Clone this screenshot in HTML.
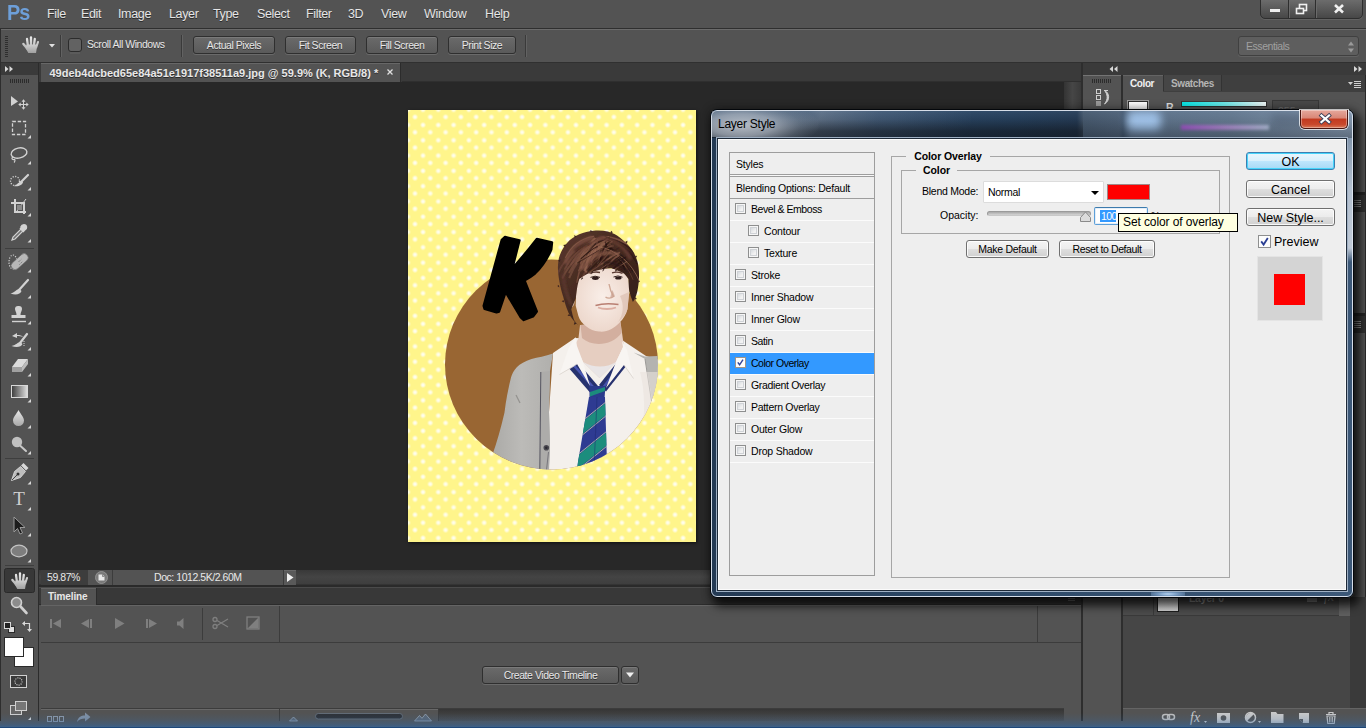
<!DOCTYPE html>
<html>
<head>
<meta charset="utf-8">
<title>Layer Style</title>
<style>
*{box-sizing:border-box;margin:0;padding:0}
html,body{width:1366px;height:728px;overflow:hidden;background:#535353;font-family:"Liberation Sans",sans-serif;}
.abs{position:absolute}
#root{position:relative;width:1366px;height:728px;overflow:hidden;background:#535353}
/* menu bar */
#menubar{left:0;top:0;width:1366px;height:28px;background:#535353}
#menubar .mi{position:absolute;top:7px;font-size:12.5px;color:#e6e6e6;text-shadow:0 1px 0 #2a2a2a;white-space:nowrap;letter-spacing:-0.35px}
#pslogo{left:7px;top:0px;font-size:22px;font-weight:bold;color:#6d9fd9;letter-spacing:-1px;transform-origin:0 0;transform:scaleX(.9)}
#winctl{left:1260px;top:-2px;width:103px;height:21px;border:1px solid #2e2e2e;border-radius:0 0 5px 5px;background:linear-gradient(#6e6e6e,#474747);box-shadow:0 1px 0 #626262}
#winctl i{position:absolute;top:0;width:1px;height:19px;background:#2e2e2e;box-shadow:1px 0 0 #6a6a6a}
/* options bar */
#optbar{left:0;top:28px;width:1366px;height:35px;background:#535353;border-top:1px solid #2f2f2f;border-bottom:1px solid #303030;box-shadow:inset 0 1px 0 #6b6b6b}
.obtn{position:absolute;top:36px;height:18px;border:1px solid #2f2f2f;border-radius:3px;background:linear-gradient(#6a6a6a,#5a5a5a);box-shadow:0 1px 0 #6a6a6a, inset 0 1px 0 #7a7a7a;color:#e8e8e8;font-size:10.5px;letter-spacing:-0.45px;text-align:center;line-height:16px;text-shadow:0 1px 0 #333;white-space:nowrap}
.vsep{position:absolute;width:1px;background:#3a3a3a;box-shadow:1px 0 0 #626262}
/* tab strip */
#tabstrip{left:39px;top:63px;width:1044px;height:19px;background:#3a3a3a}
#doctab{left:41px;top:63px;width:360px;height:19px;background:#535353;color:#e8e8e8;font-size:11px;font-weight:bold;line-height:21px;padding-left:8.5px;white-space:nowrap;text-shadow:0 1px 0 #2a2a2a;border-right:1px solid #2c2c2c;box-shadow:inset 0 1px 0 #676767}
#canvas{left:39px;top:82px;width:1044px;height:488px;background:#282828}
/* tools */
#tools{left:0;top:63px;width:39px;height:658px;background:#535353;border-right:1px solid #2c2c2c}
#toolshdr{left:0;top:63px;width:38px;height:12px;background:#3a3a3a}

/* status bar */
#status{left:39px;top:570px;width:1044px;height:18px;background:linear-gradient(#393939 0,#444 7px,#3e3e3e 14px,#2a2a2a 15px,#2a2a2a 17px,#4a4a4a 17px)}
#stzoom{left:41px;top:570px;width:47px;height:15px;background:#3d3d3d;color:#e8e8e8;font-size:10.5px;line-height:15px;padding-left:6px;letter-spacing:-0.45px}
#stmid{left:88px;top:570px;width:196px;height:15px;background:#535353}
#stdoc{left:154px;top:570px;height:15px;color:#e8e8e8;font-size:10.5px;line-height:15px;white-space:nowrap;letter-spacing:-0.45px}
#starrow{left:283px;top:570px;width:13px;height:15px;background:#595959;border-left:1px solid #3a3a3a;box-shadow:inset 0 1px 0 #686868}
/* timeline */
#tlstrip{left:39px;top:588px;width:1042px;height:17px;background:#383838;border-bottom:1px solid #2c2c2c}
#tltab{left:41px;top:588px;width:56px;height:17px;background:#535353;color:#e8e8e8;font-size:10px;letter-spacing:-0.1px;font-weight:bold;line-height:18px;padding-left:7px;border-right:1px solid #2c2c2c;box-shadow:inset 0 1px 0 #636363}
#tlbody{left:41px;top:605px;width:1040px;height:116px;background:#535353;box-shadow:inset 0 1px 0 #646464}
.hl{position:absolute;height:1px;background:#3c3c3c}
.vl{position:absolute;width:1px;background:#3c3c3c}
#cvt{left:482px;top:666px;width:137px;height:18px}
#cvtd{left:621px;top:666px;width:18px;height:18px}
/* right dock */
#dockhdr{left:1083px;top:63px;width:283px;height:12px;background:#3a3a3a}
#dockgap{left:1081px;top:63px;width:2px;height:658px;background:#2e2e2e}
#iconstrip{left:1083px;top:75px;width:38px;height:646px;background:#535353;box-shadow:inset 0 1px 0 #747474}
#dockgap2{left:1121px;top:75px;width:2px;height:646px;background:#2e2e2e}
#ptabs{left:1123px;top:75px;width:243px;height:17px;background:#3f3f3f}
#ptab1{left:1123px;top:75px;width:40px;height:17px;background:#535353;color:#f0f0f0;font-size:10px;letter-spacing:-0.4px;font-weight:bold;line-height:17px;padding-left:7px;box-shadow:inset 0 1px 0 #646464}
#ptab2{left:1163px;top:75px;width:59px;height:16px;background:#464646;color:#b4b4b4;font-size:10px;letter-spacing:-0.4px;font-weight:bold;line-height:17px;padding-left:7px;border-left:1px solid #333;border-right:1px solid #333}
#pbodyall{left:1123px;top:75px;width:243px;height:646px;background:#535353}
#lybody{left:1123px;top:597px;width:227px;height:111px;background:#464646}
#lyrow{left:1123px;top:590px;width:227px;height:26px;background:#4c4c4c;border-bottom:1px solid #3a3a3a}
#lyscroll{left:1350px;top:597px;width:16px;height:111px;background:#3a3a3a}
#lybar{left:1123px;top:708px;width:243px;height:13px;background:#535353;box-shadow:inset 0 1px 0 #646464}
#bluestrip{left:0;top:713px;width:1366px;height:15px;background:linear-gradient(rgba(52,108,170,0) 0%,rgba(52,108,170,.14) 40%,rgba(50,104,164,.36) 70%,rgba(52,100,154,.60) 86%,rgba(56,100,150,.82) 93.3%,#1e4878 93.4%,#1c467a 100%)}

/* document image */
#doc{left:408px;top:110px;width:288px;height:432px;background-color:#fff58b;box-shadow:1px 1px 3px rgba(0,0,0,.6);overflow:hidden}
/* dialog */
#doc{background-image:radial-gradient(circle,#fffdec 0,#fffdec 1px,rgba(255,253,236,0) 3.1px),radial-gradient(circle,#fffdec 0,#fffdec 1px,rgba(255,253,236,0) 3.1px);background-size:15.3px 15.3px,15.3px 15.3px;background-position:-0.65px -0.65px,-7.95px -7.95px;}
#essentials{left:1238px;top:36px;width:121px;height:20px;border:1px solid #404040;border-radius:3px;background:#5e5e5e;box-shadow:0 1px 0 #626262;color:#a0a0a0;font-size:10.5px;letter-spacing:-0.45px;line-height:18px;padding-left:7px}
/*DLGCSS*/
#dlgshadow{left:710px;top:109px;width:644px;height:489px;border-radius:7px;box-shadow:0 0 10px 1px rgba(0,0,0,.22), 4px 6px 10px 2px rgba(0,0,0,.72)}
#dlg{left:710px;top:109px;width:644px;height:489px;border-radius:7px;border:1px solid #04070b;background:#2b4665;overflow:hidden}
#dlghi{left:0;top:0;right:0;bottom:0;position:absolute;border:1px solid rgba(222,229,238,.95);border-radius:6px}
#glass1{position:absolute;left:0;top:0;width:642px;height:28px;background:linear-gradient(90deg,#2a4360 0,#2a4360 70px,#2b4664 180px,#26405c 300px,#253b55 366px,#45576b 372px,#4c5e73 408px,#3f5268 412px,#5b6f86 420px,#63778d 520px,#788ba2 600px,#8295ab 642px)}
#glass2{position:absolute;left:0;top:0;width:372px;height:28px;background:linear-gradient(rgba(140,175,215,.10) 0,rgba(20,28,40,.10) 35%,rgba(14,18,24,.55) 75%,rgba(12,16,22,.62) 100%)}
#glass2b{position:absolute;left:372px;top:0;width:270px;height:28px;background:linear-gradient(rgba(150,180,215,.12) 0,rgba(20,28,40,.04) 40%,rgba(14,18,24,.22) 80%,rgba(12,16,22,.30) 100%)}
#glass4{position:absolute;left:50px;top:0;width:210px;height:28px;background:linear-gradient(108deg,rgba(150,160,174,0) 0,rgba(150,160,174,.50) 28%,rgba(125,140,160,.28) 55%,rgba(120,140,165,0) 100%)}
#blob1{position:absolute;left:416px;top:1px;width:34px;height:20px;background:#a9cdf5;filter:blur(4px);opacity:.9;border-radius:6px}
#blob2{position:absolute;left:470px;top:15px;width:88px;height:5px;background:linear-gradient(90deg,#a055c8,#b08ad0 50%,#b4c0dc);filter:blur(1.600px)}
#blob3{position:absolute;left:560px;top:2px;width:48px;height:14px;background:#4c5c70;filter:blur(4px);opacity:.5}
#glass3{position:absolute;left:0;top:28px;width:642px;height:459px;background:linear-gradient(90deg,#243a54 0,#243a54 8px,#2c4866 40%,#3c5878 98%)}
#blob4{position:absolute;left:440px;top:481px;width:34px;height:6px;background:radial-gradient(ellipse at center,rgba(190,220,250,.95),rgba(150,190,235,.6) 45%,rgba(120,160,210,0) 100%)}
#glass5{position:absolute;right:0;top:28px;width:8px;height:200px;background:linear-gradient(rgba(200,210,222,.5) 0,rgba(200,210,222,.85) 25%,rgba(205,213,224,.9) 55%,rgba(205,213,224,0) 62%)}
#titleglow{left:712px;top:111px;width:130px;height:26px;background:radial-gradient(ellipse 78px 26px at 30px 14px,rgba(206,211,218,.86),rgba(196,202,211,.66) 42%,rgba(180,188,198,.25) 75%,rgba(170,180,192,0) 100%)}
#client{left:718px;top:139px;width:628px;height:451px;background:#eeeeee;border:1px solid #fbfbfb}
#clientframe{left:716px;top:137px;width:632px;height:455px;border:1px solid #9fb0c4;box-shadow:inset 0 0 0 1px #1e2a38}
#dlgtitle{left:718px;top:117px;font-size:12px;color:#000;white-space:nowrap;letter-spacing:-0.25px}
#closebtn{left:1300px;top:110px;width:48px;height:19px;border:1px solid #4a1510;border-top:none;border-radius:0 0 5px 5px;background:linear-gradient(#e6a89c 0%,#d98676 45%,#c23a20 50%,#c8482c 80%,#d87858 100%);box-shadow:0 0 0 1px rgba(255,255,255,.75), inset 0 0 0 1px rgba(255,255,255,.35)}
.dt{position:absolute;font-size:10.5px;letter-spacing:-0.2px;color:#000;white-space:nowrap;line-height:13px}
.dt.b{font-weight:bold;letter-spacing:-0.1px;text-align:center}
.wbtn{position:absolute;border:1px solid #707070;border-radius:3px;background:linear-gradient(#f4f4f4 0%,#ececec 48%,#dedede 52%,#d0d0d0 100%);box-shadow:inset 0 0 0 1px rgba(255,255,255,.85);font-size:11px;color:#000;text-align:center;white-space:nowrap}
#okbtn{border-color:#3c7fb1;background:linear-gradient(#eaf6fd 0%,#d9f0fc 48%,#bee6fd 52%,#a7d9f5 100%);box-shadow:inset 0 0 0 1px #46d4fb}
.cb{position:absolute;width:11px;height:11px;border:1px solid #8e8f8f;background:#f6f6f6}
.cb i{position:absolute;left:1px;top:1px;width:7px;height:7px;border:1px solid #cfd2d6;background:linear-gradient(135deg,#d6dade,#f2f2f2 70%)}
.cb.on{background:#fdfdfd;border-color:#a09488}
.cb.big{width:13px;height:13px;border-color:#8e8f8f}
.rowsep{position:absolute;left:730px;width:144px;height:1px;background:#fbfbfb}
/*ENDDLGCSS*/</style>
</head>
<body>
<div id="root">

<!-- MENU BAR -->
<div id="menubar" class="abs">
  <div id="pslogo" class="abs">Ps</div>
  <div class="mi" style="left:47px">File</div>
  <div class="mi" style="left:81px">Edit</div>
  <div class="mi" style="left:118px">Image</div>
  <div class="mi" style="left:169px">Layer</div>
  <div class="mi" style="left:213px">Type</div>
  <div class="mi" style="left:257px">Select</div>
  <div class="mi" style="left:306px">Filter</div>
  <div class="mi" style="left:348px">3D</div>
  <div class="mi" style="left:381px">View</div>
  <div class="mi" style="left:424px">Window</div>
  <div class="mi" style="left:485px">Help</div>
  <div id="winctl" class="abs"><i style="left:27px"></i><i style="left:54px"></i></div>
</div>

<!-- OPTIONS BAR -->
<div id="optbar" class="abs"></div>
<div class="obtn" style="left:193px;width:82px">Actual Pixels</div>
<div class="obtn" style="left:285px;width:71px">Fit Screen</div>
<div class="obtn" style="left:366px;width:72px">Fill Screen</div>
<div class="obtn" style="left:448px;width:68px">Print Size</div>


<!-- options bar left -->
<svg class="abs" style="left:0;top:29px" width="200" height="33" viewBox="0 29 200 33" fill="none">
<path d="M6.500 36v21" stroke="#2e2e2e" stroke-width="3" stroke-dasharray="1 1"/>
<g transform="translate(22 36)"><g stroke="url(#ig)" stroke-linecap="round" fill="none"><path d="M5.600 13 L1.400 8" stroke-width="2.400"/><path d="M6 10.500 L5 2.800" stroke-width="2.300"/><path d="M9 10 L9 1.500" stroke-width="2.300"/><path d="M11.800 10.500 L12.800 2.800" stroke-width="2.300"/><path d="M14.200 11.500 L16 6" stroke-width="2.100"/></g><path d="M3.200 11.500 L4.800 8.500 L15.400 8.500 L14 17 L6.300 17 Z" fill="url(#ig2)"/></g>
<path d="M49 44h6l-3 3.500z" fill="#e0e0e0"/>
<path d="M60.500 35v22" stroke="#3a3a3a"/><path d="M61.500 35v22" stroke="#626262"/>
<rect x="68.500" y="38.500" width="13" height="13" rx="2.500" fill="#626262" stroke="#2c2c2c"/><path d="M70 53h10" stroke="#646464"/>
<path d="M181.500 35v22" stroke="#3a3a3a"/><path d="M182.500 35v22" stroke="#626262"/>
</svg>
<div class="abs" style="left:87px;top:38px;font-size:10.5px;letter-spacing:-0.45px;color:#e8e8e8;text-shadow:0 1px 0 #333;white-space:nowrap">Scroll All Windows</div>
<div class="vsep" style="left:525px;top:35px;height:22px"></div>
<div class="abs" id="essentials">Essentials</div>
<svg class="abs" style="left:1346px;top:40px" width="10" height="14" viewBox="0 0 10 14"><path d="M5 1.500 L8 5.500 H2z M5 12.500 L8 8.500 H2z" fill="#9a9a9a"/></svg>
<svg class="abs" style="left:1261px;top:0" width="102" height="19" viewBox="1261 0 102 19" fill="none">
<rect x="1270" y="9" width="10" height="3" fill="#f0f0f0"/>
<rect x="1299.500" y="4.500" width="7" height="6" stroke="#f0f0f0" stroke-width="1.600"/><rect x="1296.500" y="8.500" width="7" height="5" fill="#5a5a5a" stroke="#f0f0f0" stroke-width="1.600"/>
<path d="M1335 5 L1343 12.500 M1343 5 L1335 12.500" stroke="#f0f0f0" stroke-width="2.600"/>
</svg>

<!-- TAB STRIP / CANVAS -->
<div id="tabstrip" class="abs"></div>
<div id="doctab" class="abs">49deb4dcbed65e84a51e1917f38511a9.jpg @ 59.9% (K, RGB/8) *</div>
<div id="canvas" class="abs"></div>
<div class="abs" style="left:402px;top:81px;width:679px;height:1px;background:#2f2f2f"></div>
<div class="abs" style="left:1064px;top:82px;width:17px;height:488px;background:linear-gradient(90deg,#343434,#464646 50%,#3a3a3a)"></div>
<svg class="abs" style="left:385px;top:67px" width="10" height="10" viewBox="0 0 10 10"><path d="M2.500 2.500 L7.500 7.500 M7.500 2.500 L2.500 7.500" stroke="#e0e0e0" stroke-width="1.300"/></svg>

<!-- TOOLS -->
<div class="abs" style="left:0;top:29px;width:1px;height:692px;background:#2e2e2e;z-index:3"></div>
<div id="tools" class="abs"></div>
<div id="toolshdr" class="abs"></div>
<svg class="abs" style="left:0;top:0" width="40" height="728" viewBox="0 0 40 728" fill="none">
<defs>
<linearGradient id="gg" x1="0" y1="0" x2="1" y2="0"><stop offset="0" stop-color="#3a3a3a"/><stop offset="1" stop-color="#e0e0e0"/></linearGradient>
<linearGradient id="ig" gradientUnits="userSpaceOnUse" x1="0" y1="0" x2="0" y2="17"><stop offset="0" stop-color="#f0f0f0"/><stop offset="1" stop-color="#9c9c9c"/></linearGradient><linearGradient id="ig2" x1="0" y1="0" x2="0" y2="1"><stop offset="0" stop-color="#cfcfcf"/><stop offset="1" stop-color="#a0a0a0"/></linearGradient><linearGradient id="ig3" x1="0" y1="0" x2="0" y2="1"><stop offset="0" stop-color="#e8e8e8"/><stop offset="1" stop-color="#a8a8a8"/></linearGradient>
</defs>
<!-- header arrows -->
<path d="M5 66 l3.5 3 -3.5 3z M9.5 66 l3.5 3 -3.5 3z" fill="#d8d8d8"/>
<!-- grip -->
<path d="M10.5 79v4M12.5 79v4M14.5 79v4M16.5 79v4M18.5 79v4M20.5 79v4M22.5 79v4M24.5 79v4M26.5 79v4M28.5 79v4" stroke="#2c2c2c" stroke-width="1"/>
<!-- sub-tool triangles -->
<g fill="#d8d8d8">
<path d="M31 135 v3.500 h-3.500z"/><path d="M31 161 v3.500 h-3.500z"/><path d="M31 187 v3.500 h-3.500z"/><path d="M31 213 v3.500 h-3.500z"/><path d="M31 239 v3.500 h-3.500z"/><path d="M31 269 v3.500 h-3.500z"/><path d="M31 295 v3.500 h-3.500z"/><path d="M31 321 v3.500 h-3.500z"/><path d="M31 347 v3.500 h-3.500z"/><path d="M31 373 v3.500 h-3.500z"/><path d="M31 399 v3.500 h-3.500z"/><path d="M31 425 v3.500 h-3.500z"/><path d="M31 451 v3.500 h-3.500z"/><path d="M31 481 v3.500 h-3.500z"/><path d="M31 507 v3.500 h-3.500z"/><path d="M31 533 v3.500 h-3.500z"/><path d="M31 559 v3.500 h-3.500z"/><path d="M31 588 v3.500 h-3.500z"/>
</g>
<!-- move -->
<path d="M11 96 L11 106 L18 101.5 Z" fill="#d2d2d2"/>
<path d="M23.500 101v7M20 104.500h7" stroke="#d2d2d2" stroke-width="1"/><path d="M23.500 99.300l-2 2.400h4zM23.500 109.700l-2-2.400h4zM18.300 104.500l2.400-2v4zM28.700 104.500l-2.400-2v4z" fill="#d2d2d2"/>
<!-- marquee -->
<rect x="12.5" y="121.5" width="13" height="13" stroke="#d2d2d2" stroke-width="1.3" stroke-dasharray="3.4 1.8"/>
<!-- lasso -->
<ellipse cx="19" cy="153" rx="8" ry="5" transform="rotate(-12 19 153)" stroke="#d2d2d2" stroke-width="1.4"/>
<path d="M13 157c-2 1-1 3 1 2.5c1.5-.5 1 2 0 3" stroke="#d2d2d2" stroke-width="1.2"/>
<!-- quick select -->
<circle cx="15" cy="181" r="4.5" stroke="#d2d2d2" stroke-width="1.3" stroke-dasharray="1.2 1.4"/>
<path d="M28 175 L21 182" stroke="#d2d2d2" stroke-width="2.2" stroke-linecap="round"/>
<path d="M21.5 181 c-3 1 -4 4 -8 5 c5 1 9 -1 9.500 -4z" fill="#d2d2d2"/>
<!-- crop -->
<path d="M15 199v13h11M11 203h13v11" stroke="#d2d2d2" stroke-width="2"/>
<path d="M17 211 L26 199" stroke="#d2d2d2" stroke-width="1"/>
<path d="M17 205h5v5h-5z" fill="#8a8a8a"/>
<!-- eyedropper -->
<path d="M12 240 l1-3 8-8 2 2 -8 8z" stroke="#d2d2d2" stroke-width="1.2" fill="#707070"/>
<path d="M20 228 l4 4 M21 227 c1-3 5-3 5.500 0 c.5 2 -2 3 -3 4z" stroke="#d2d2d2" stroke-width="1.6" fill="#d2d2d2"/>
<!-- sep -->
<path d="M5 248.500h29" stroke="#3e3e3e"/><path d="M5 458.500h29M5 565.500h29" stroke="#3e3e3e"/>
<!-- healing -->
<ellipse cx="13" cy="262" rx="4" ry="7" stroke="#d2d2d2" stroke-width="1.2" stroke-dasharray="1.2 1.4"/>
<rect x="10" y="257.500" width="20" height="8" rx="4" transform="rotate(-42 20 262)" fill="#b8b8b8" stroke="#6a6a6a" stroke-width=".6"/>
<path d="M18.500 262l3-3M19.500 264.500l3-3" stroke="#666" stroke-width="1" stroke-dasharray="1 1"/>
<!-- brush -->
<path d="M28 280 L19 290" stroke="#d2d2d2" stroke-width="2.2" stroke-linecap="round"/>
<path d="M19.500 289 c-3 0 -4 3 -9 4.500 c5 2 10 1 11 -2.500z" fill="#d2d2d2"/>
<!-- stamp -->
<path d="M19 306 a3 3 0 0 1 3 3 c0 2 -1.500 3 -1.500 6 h5v3h-14v-3h5 c0-3 -1.500-4 -1.500-6 a3 3 0 0 1 3-3z" fill="#d2d2d2"/>
<path d="M12 321.500h14" stroke="#d2d2d2" stroke-width="1.4"/>
<!-- history brush -->
<path d="M27 334 L20 343" stroke="#d2d2d2" stroke-width="2.2" stroke-linecap="round"/>
<path d="M20.500 342 c-3 0 -4 3 -9 4 c5 2 10 1 11 -2z" fill="#d2d2d2"/>
<path d="M12 336 l5-3v2 c3 0 5 .5 6 2 c-2-1 -4-1 -6-1v2z" fill="#d2d2d2"/>
<path d="M24 341v6" stroke="#d2d2d2" stroke-width="1" stroke-dasharray="1 1"/>
<!-- eraser -->
<path d="M12 367 l6-8h10l-6 8z" fill="#dcdcdc"/><path d="M12 367h10v5h-10z" fill="#a0a0a0"/><path d="M22 367l6-8v5l-6 8z" fill="#bcbcbc"/>
<!-- gradient -->
<rect x="11.500" y="385.500" width="16" height="12" fill="url(#gg)" stroke="#d8d8d8"/>
<!-- blur drop -->
<path d="M18.500 410 c2 4 5.500 7 5.500 10.500 a5.500 5.500 0 0 1 -11 0 c0-3.500 3.500-6.500 5.500-10.500z" fill="url(#ig3)"/>
<!-- dodge -->
<circle cx="17" cy="442" r="5.200" fill="#c0c0c0"/><path d="M20.500 446 L26 451" stroke="#c8c8c8" stroke-width="2" stroke-linecap="round"/>
<!-- pen -->
<path d="M11.500 480.500 l3-9 6-5 5 5 -5 6z" fill="#bdbdbd" stroke="#e0e0e0" stroke-width=".8"/>
<path d="M21 465.500 l2.500-2.500 5 5 -2.500 2.500z" fill="#d8d8d8"/>
<circle cx="18" cy="474" r="1.500" fill="#333"/><path d="M12 480 l5-5" stroke="#444" stroke-width="1"/>
<!-- T -->
<text x="19" y="505" font-family="Liberation Serif" font-size="19" fill="#d0d0d0" text-anchor="middle">T</text>
<!-- path select -->
<path d="M14 517 v15 l3.500-3.500 2.500 5.500 2.500-1 -2.500-5.500 h5z" fill="#1c1c1c" stroke="#9a9a9a" stroke-width="1"/>
<!-- ellipse -->
<ellipse cx="19" cy="551" rx="8" ry="5.800" fill="#7e7e7e" stroke="#c4c4c4" stroke-width="1.200"/>
<!-- hand selected -->
<rect x="4.500" y="568.500" width="30" height="24" rx="2" fill="#383838" stroke="#2a2a2a"/>
<g id="handic" transform="translate(11 572)">
<g stroke="url(#ig)" stroke-linecap="round" fill="none"><path d="M5.600 13 L1.400 8" stroke-width="2.400"/><path d="M6 10.500 L5 2.800" stroke-width="2.300"/><path d="M9 10 L9 1.500" stroke-width="2.300"/><path d="M11.800 10.500 L12.800 2.800" stroke-width="2.300"/><path d="M14.200 11.500 L16 6" stroke-width="2.100"/></g><path d="M3.200 11.500 L4.800 8.500 L15.400 8.500 L14 17 L6.300 17 Z" fill="url(#ig2)"/>
</g>
<!-- zoom -->
<circle cx="16.500" cy="602.500" r="5" fill="#8c8c8c" stroke="#d0d0d0" stroke-width="1.600"/><path d="M20.500 606.500 L26.500 613" stroke="#d0d0d0" stroke-width="2.600" stroke-linecap="round"/>
<!-- default colors / swap -->
<rect x="8.500" y="626.500" width="6" height="6" fill="#e0e0e0" stroke="#2a2a2a"/><rect x="4.500" y="622.500" width="6" height="6" fill="#222" stroke="#d8d8d8"/>
<path d="M24 623.500 h5.500 v6" stroke="#d8d8d8" stroke-width="1.200"/><path d="M22 623.500 l3-2.500v5z M29.500 632 l-2.500-3h5z" fill="#d8d8d8"/>
<!-- fg/bg -->
<rect x="14.500" y="647.500" width="19" height="19" fill="#fff" stroke="#2a2a2a"/><rect x="4.500" y="637.500" width="19" height="19" fill="#fff" stroke="#2a2a2a"/>
<!-- quick mask -->
<rect x="10.500" y="675.500" width="16" height="12" fill="#3a3a3a" stroke="#d0d0d0"/><circle cx="18.500" cy="681.500" r="3.600" stroke="#e0e0e0" stroke-width="1.100" stroke-dasharray="1 1.200"/>
<!-- screen mode -->
<rect x="10.500" y="705.500" width="11" height="9" fill="#666" stroke="#d0d0d0"/><rect x="15.500" y="701.500" width="11" height="9" fill="#777" stroke="#d0d0d0"/>
<path d="M31 717v3h-3z" fill="#d8d8d8"/>
</svg>


<!-- STATUS BAR -->
<div id="status" class="abs"></div>
<div id="stzoom" class="abs">59.87%</div>
<div id="stmid" class="abs"></div>
<div class="vl" style="left:112px;top:570px;height:15px"></div>
<div id="stdoc" class="abs">Doc: 1012.5K/2.60M</div>
<div id="starrow" class="abs"></div>

<!-- TIMELINE -->
<div id="tlstrip" class="abs"></div>
<div id="tltab" class="abs">Timeline</div>
<div id="tlbody" class="abs"></div>
<div class="hl" style="left:41px;top:642px;width:1040px"></div>
<div class="abs" style="left:438px;top:709px;width:626px;height:12px;background:linear-gradient(#363636,#4c4c4c)"></div><div class="hl" style="left:41px;top:708px;width:1023px"></div><div class="abs" style="left:41px;top:709px;width:397px;height:1px;background:#686868"></div><div class="vl" style="left:438px;top:709px;height:12px"></div>
<div class="vl" style="left:202px;top:608px;height:32px"></div>
<div class="vl" style="left:279px;top:606px;height:36px"></div>
<div class="vl" style="left:1037px;top:606px;height:36px"></div>
<div class="vl" style="left:279px;top:709px;height:12px"></div>
<div class="obtn" id="cvt" style="position:absolute">Create Video Timeline</div>
<div class="obtn" id="cvtd" style="position:absolute"></div>


<svg class="abs" style="left:39px;top:566px" width="1044" height="160" viewBox="39 566 1044 160" fill="none">
<!-- status icons -->
<circle cx="101.500" cy="577.500" r="6" fill="#7a7a7a" stroke="#9a9a9a" stroke-width=".8"/><path d="M98.500 574.500h4l2 2v4h-6z" fill="#e8e8e8"/><path d="M102.500 574.500v2h2" stroke="#666" stroke-width=".7"/>
<path d="M287 573 l6.500 4.500 -6.500 4.500z" fill="#f0f0f0"/>
<!-- timeline controls -->
<g fill="#7f7f7f">
<rect x="50" y="619" width="2" height="9"/><path d="M61 619v9l-8-4.500z"/>
<path d="M89 619v9l-8-4.500z"/><rect x="90" y="619" width="2" height="9"/>
<path d="M115 618v11l9.500-5.500z"/>
<rect x="146" y="619" width="2" height="9"/><path d="M149 619v9l8-4.500z"/>
<path d="M177 621.500h2.500l4-3.500v11l-4-3.500h-2.500z"/>
<rect x="247" y="617" width="12" height="12" fill="none" stroke="#7f7f7f" stroke-width="1.300"/><path d="M258.500 617.500v11h-11z"/>
</g>
<g stroke="#7f7f7f" stroke-width="1.300"><circle cx="215" cy="619.500" r="2"/><circle cx="215" cy="626.500" r="2"/><path d="M217 620.500 L228 627 M217 625.500 L228 619"/></g>
<!-- bottom bar -->
<g stroke="#8c98a8" stroke-width="1"><rect x="47.500" y="716.500" width="4" height="5"/><rect x="53.500" y="716.500" width="4" height="5"/><rect x="59.500" y="716.500" width="4" height="5"/></g>
<path d="M77 722 c1-5 4-6.500 8-6.500 v-3 l5.500 4.500 -5.500 4.500 v-3 c-3 0 -6 .5 -8 3.500z" fill="#8090a4"/>
<path d="M289.500 721 l4-4 4 4z" fill="#5a6674" stroke="#98a4b2" stroke-width=".8"/>
<rect x="315.500" y="713.500" width="87" height="5.500" rx="2.750" fill="#2e3136" stroke="#66707c" stroke-width=".9"/>
<path d="M414.500 721 l5-5.500 2.500 2.800 3.500-4.300 6 7z" fill="#5a6674" stroke="#98a4b2" stroke-width=".8"/>
<!-- create video dropdown arrow -->
<path d="M626 672.500 h8 l-4 5z" fill="#f0f0f0"/>
<!-- panel menu -->
<path d="M1068 596.500h7M1068 598.500h7M1068 600.500h7" stroke="#777"/>
</svg>

<!-- RIGHT DOCK -->
<div id="dockgap" class="abs"></div>
<div id="dockhdr" class="abs"></div>
<div id="iconstrip" class="abs"></div>
<div id="dockgap2" class="abs"></div>
<div id="pbodyall" class="abs"></div>
<div id="ptabs" class="abs"></div>
<div id="ptab1" class="abs">Color</div>
<div id="ptab2" class="abs">Swatches</div>
<!-- color panel bits -->
<div class="abs" style="left:1127px;top:100px;width:22px;height:22px;border:1px solid #9a9a9a;background:linear-gradient(#fff,#d8d8d8);box-shadow:inset 0 0 0 1px #2e2e2e"></div>
<div class="abs" style="left:1166px;top:101px;font-size:10.5px;color:#dcdcdc;font-weight:bold">R</div>
<div class="abs" style="left:1181px;top:101px;width:86px;height:6px;background:linear-gradient(90deg,#08e4e4,#6ce8e8 50%,#f0f6f6);border:1px solid #2c2c2c;border-top-color:#3a3a3a"></div>
<div class="abs" style="left:1272px;top:100px;width:47px;height:18px;background:#484848;border:1px solid #383838;color:#6c6c6c;font-size:10.5px;line-height:20px;padding-left:5px">255</div>
<!-- panel group separators -->
<div class="abs" style="left:1123px;top:192px;width:243px;height:3px;background:#262626"></div>
<div class="abs" style="left:1123px;top:195px;width:243px;height:17px;background:#333"></div>
<div class="abs" style="left:1123px;top:313px;width:243px;height:3px;background:#262626"></div>
<div class="abs" style="left:1123px;top:316px;width:243px;height:17px;background:#333"></div>
<div class="abs" style="left:1365px;top:75px;width:1px;height:633px;background:#2a2a2a"></div>
<svg class="abs" style="left:1083px;top:63px" width="283" height="60" viewBox="1083 63 283 60" fill="none">
<path d="M1113 66 l-3.500 3 3.500 3z M1117.500 66 l-3.500 3 3.500 3z" fill="#d8d8d8"/>
<path d="M1354 66 l3.500 3 -3.500 3z M1358.500 66 l3.500 3 -3.500 3z" fill="#d8d8d8"/>
<path d="M1092.500 79v4M1094.500 79v4M1096.500 79v4M1098.500 79v4M1100.500 79v4M1102.500 79v4M1104.500 79v4M1106.500 79v4M1108.500 79v4M1110.500 79v4" stroke="#2c2c2c"/>
<path d="M1348 82 h5 l-2.500 3z" fill="#d0d0d0"/><path d="M1354 81.500h7M1354 83.500h7M1354 85.500h7M1354 87.500h7" stroke="#d0d0d0" stroke-width="1"/>
<!-- history icon -->
<rect x="1096.500" y="89.500" width="4" height="4" stroke="#cfcfcf"/><rect x="1096.500" y="95.500" width="4" height="4" stroke="#cfcfcf"/><rect x="1096" y="101" width="5" height="5" fill="#9a9a9a"/>
<path d="M1104 90.500 h4 M1104.500 90.500 c5 2 6 10 0 13.500 c4-5 3-10 0-13.500z" fill="#cfcfcf" stroke="#cfcfcf" stroke-width="1"/>
</svg>
<svg class="abs" style="left:1352px;top:195px" width="14" height="140" viewBox="1352 195 14 140" fill="none">
<path d="M1354 200.500h7M1354 202.500h7M1354 204.500h7M1354 206.500h7M1354 321.500h7M1354 323.500h7M1354 325.500h7M1354 327.500h7" stroke="#9a9a9a"/>
</svg>
<!-- layers panel bottom -->
<div id="lybody" class="abs"></div>
<div id="lyrow" class="abs"></div>
<div class="abs" style="left:1153px;top:590px;width:1px;height:26px;background:#3a3a3a"></div>
<div class="abs" style="left:1157px;top:588px;width:22px;height:24px;background:linear-gradient(#fff,#d0d0d0);border:1px solid #1e1e1e"></div>
<div class="abs" style="left:1339px;top:590px;width:11px;height:26px;background:#5e5e5e"></div>
<div class="abs" style="left:1189px;top:592px;font-size:10.5px;color:#a4a4a4;font-weight:bold;letter-spacing:-0.3px">Layer 0</div>
<div class="abs" style="left:1307px;top:595px;width:10px;height:7px;background:#8c8c8c"></div><div class="abs" style="left:1324px;top:589px;font-family:'Liberation Serif',serif;font-style:italic;font-size:14px;color:#9a9a9a">fx</div>
<div id="lyscroll" class="abs"></div>
<div id="lybar" class="abs"></div>
<svg class="abs" style="left:1155px;top:708px" width="190" height="18" viewBox="1155 708 190 18" fill="none">
<g stroke="#bdbdbd" stroke-width="1.500"><rect x="1162.500" y="714.500" width="7" height="5" rx="2.500"/><rect x="1167.500" y="714.500" width="7" height="5" rx="2.500"/></g>
<text x="1190" y="722" font-family="Liberation Serif" font-style="italic" font-size="14" fill="#d0d0d0">fx</text><path d="M1204 721h3l-1.500 2z" fill="#d0d0d0"/>
<rect x="1217" y="713" width="13" height="10" fill="#c8c8c8"/><circle cx="1223.500" cy="718" r="2.800" fill="#555"/>
<circle cx="1250.500" cy="717.500" r="5" stroke="#c8c8c8" stroke-width="1.500"/><path d="M1247 721 a5 5 0 0 1 7-7z" fill="#c8c8c8"/><path d="M1258 721h3l-1.500 2z" fill="#d0d0d0"/>
<path d="M1271 712h5l1.500 2h6v9h-12.500z" fill="#c8c8c8"/>
<path d="M1299 713h10v10h-6l-4-4z" fill="#c8c8c8"/><path d="M1299 719h4v4z" fill="#555"/>
<path d="M1326 714.500h10M1329 714v-1.500h4v1.500" stroke="#c8c8c8" stroke-width="1.200"/><path d="M1327 716h8l-.8 7.500h-6.400z" stroke="#c8c8c8" stroke-width="1.200"/><path d="M1329.500 717v5.500M1331 717v5.500M1332.500 717v5.500" stroke="#c8c8c8" stroke-width=".8"/>
</svg>

<!-- DOCUMENT IMAGE -->
<div id="doc" class="abs"><svg class="abs" style="left:0;top:0" width="288" height="432" viewBox="408 110 288 432">
<defs>
<clipPath id="circ"><ellipse cx="551.5" cy="364.5" rx="106.5" ry="105"/></clipPath>
<clipPath id="tiec"><path d="M589 397 L605 397 L607 464 L606 470 L577 470 L578 462 Z"/></clipPath>
<linearGradient id="hairg" x1="0" y1="0" x2="1" y2="1"><stop offset="0" stop-color="#5a372e"/><stop offset=".5" stop-color="#43291f"/><stop offset="1" stop-color="#2e1a18"/></linearGradient>
<radialGradient id="faceg" cx=".5" cy=".45" r=".6"><stop offset="0" stop-color="#f9eee8"/><stop offset="1" stop-color="#ecd6ca"/></radialGradient>
<linearGradient id="cardg" x1="0" y1="0" x2="1" y2="0"><stop offset="0" stop-color="#a9a8a5"/><stop offset=".5" stop-color="#bcbbb8"/><stop offset="1" stop-color="#b0afac"/></linearGradient>
<clipPath id="hairc"><path d="M557.900 268.200 C558 263 558.500 259 559.600 255.700 C561.500 250.500 564 246.500 566.800 243.200 C570.500 239 574.500 236.500 579.300 234.300 C584 232.200 588.500 231 593.600 230.700 C598.500 230.300 603.500 230.500 607.900 231.600 C612.500 233 616.500 235 620.400 237.900 C624.500 241 628 244.500 631 248.600 C633.800 252.500 636 256.500 637.300 261 C638.700 266 639.200 271.500 639 277 C638.800 282 638.300 287 637.300 291.400 C636.300 295.500 635 299 632.900 302 C631.500 298.500 630.200 295 629.300 291.400 C628.800 287.500 628.600 283 628.400 279 C627 277 625.500 275 624 273.600 C620 271.500 616 269.500 611.400 268.200 C607 268 603 268.800 599 270 C595 271 591.500 272 588.200 273.600 C585 275 582 277 579.300 279 C578 283 577.200 287 576.600 291.400 L575.700 298.600 C574.500 302 572.500 305.500 571.300 309.300 C572 313 573 316.500 574 320 C575.500 322 577 324 578.400 325.400 C574.500 322 571 317.500 568.600 312.900 C566.200 307.500 564.500 302 563.200 296.800 C561.700 292 560.500 287.500 559.600 282.500 C558.700 277.500 558 273 557.900 268.200 Z"/></clipPath><filter id="soft" x="-5%" y="-5%" width="110%" height="110%"><feGaussianBlur stdDeviation=".45"/></filter>
<filter id="soft2" x="-10%" y="-10%" width="120%" height="120%"><feGaussianBlur stdDeviation="1.1"/></filter>
</defs>
<ellipse cx="551.5" cy="364.5" rx="106.5" ry="105" fill="#996633"/>
<g filter="url(#soft)">
<g clip-path="url(#circ)">
  <!-- shirt base -->
  <path d="M553 353 L575 338 L622 340 L646 356 L660 360 L660 480 L540 480 L549 412 Z" fill="#f4f0ec"/>
  <!-- cardigan left -->
  <path d="M553 353.500 C545 356 538 357.500 531.500 359 C525 361 520 364 517 367 C514 370 512 374 511 377.500 C508 390 506 400 504.500 412.500 C501 428 497 442 492 456 L490 480 L549 480 L549 466 L550 445 L549 412 L550 371 Z" fill="url(#cardg)"/>
  <!-- placket -->
  <path d="M541 372 C541 400 540.500 430 539.500 472 L549 472 L550 445 L549 412 L550 371 Z" fill="#adacaa"/>
  <path d="M540.800 372 L539.800 472" stroke="#4a4856" stroke-width=".9"/><path d="M548.500 452 L546.500 470" stroke="#6a6870" stroke-width=".8"/>
  <path d="M516 395 l4 8" stroke="#94938f" stroke-width="1.200"/>
  <circle cx="546.300" cy="447.800" r="2.800" fill="#4a4850"/><circle cx="546.300" cy="447.800" r="1.200" fill="#2a2830"/>
  <!-- cardigan right -->
  <path d="M633.500 352.500 L645 356.500 L660 356 L664 420 L652 400 L648 375 L645 359 Z" fill="#b4b3b0"/>
  <path d="M645 359 L651 398 L653 410" stroke="#9a9996" stroke-width="1"/>
  <!-- shirt shading -->
  <path d="M640 372 C646 395 646 425 636 452 L660 452 L660 372 Z" fill="#e9e3de" opacity=".6"/>
  <!-- tie bands -->
  <path d="M567.500 366.500 L575.500 359.500 L598 386 L590 392.500 Z" fill="#27306e"/>
  <path d="M573 364.500 L594 388" stroke="#4654b0" stroke-width="2.600"/>
  <path d="M628.500 363 L621.500 356.500 L599 385 L606 391.500 Z" fill="#27306e"/>
  <path d="M623.500 361.500 L603.500 387" stroke="#4452aa" stroke-width="2.400"/>
  <!-- knot -->
  <path d="M589.500 386 L605.500 386 L604.500 398 L589.500 398 Z" fill="#2c3a8c"/>
  <path d="M590 392 L605 387 L605 391 L590 396.500 Z" fill="#1c8c7c"/>
  <!-- tie body -->
  <path d="M589 397 L605 397 L607 464 L606 470 L577 470 L578 462 Z" fill="#2d3b92"/>
  <g clip-path="url(#tiec)">
    <path d="M570 432 L612 398 L612 410 L570 444 Z M570 462 L612 428 L612 441 L570 475 Z M570 492 L612 458 L612 470 L570 504 Z" fill="#1b8d7d"/>
    <path d="M570 431 L612 397 M570 445 L612 411 M570 461 L612 427 M570 476 L612 442 M570 491 L612 457" stroke="#c9cfa8" stroke-width=".8"/>
    <path d="M597 397 L594 470" stroke="#202a70" stroke-width="1" opacity=".5"/>
  </g>
</g>
<!-- neck -->
<path d="M580 325 L578.500 338 L575 345 L583 362 L599.500 378 L616 362 L624 345 L623 340 L620.500 322 Z" fill="#e6cec1"/>
<path d="M582 338 C592 347 612 346 621.500 333 L620.500 322 L580.500 325 Z" fill="#cfa999" opacity=".85"/>
<!-- undershirt in V -->
<path d="M583 362 L599.500 378 L616 362 C606 368 594 368 583 362 Z" fill="#e9e5e6"/>
<!-- collar -->
<path d="M575.500 337 L568.500 348.500 L559.500 374.500 L572.500 367 L577 364 L590 386 L583 362 L577 346 Z" fill="#f8f5f2"/>
<path d="M559.500 374.500 L572.500 367 L577 364" stroke="#d8d2cc" stroke-width=".8" fill="none"/>
<path d="M622 341 L627 350 L633.500 378.500 L624 365 L606 388 L616 362 L623 347 Z" fill="#f8f5f2"/>
<path d="M633.500 378.500 L624 365" stroke="#d8d2cc" stroke-width=".8" fill="none"/>
<!-- ear -->
<ellipse cx="570" cy="301.500" rx="4.600" ry="6.500" fill="#e8cbbd"/>
<!-- face -->
<path d="M576.600 280 C577 274 590 268 600 268 C612 268 626 270 628.500 279 L629.300 291.400 L627.500 309.300 C626 315 623 319 620.400 321.800 C617 325.500 614 327.500 611.400 329 C607 331.500 603 332 599 331.600 C594 331 590 329.500 586.400 326.500 C582 323 579.500 320 578.400 316 L575.700 305.700 Z" fill="url(#faceg)"/>
<path d="M620 296 C624 304 624 314 618 322 C623 318 626 314 627.500 309 L629 292 Z" fill="#dcbfb0" opacity=".7"/>
<!-- features -->
<ellipse cx="595.400" cy="278.200" rx="3.400" ry="1.700" fill="#2e1c1c"/><ellipse cx="618.300" cy="278" rx="3.200" ry="1.600" fill="#2e1c1c"/><path d="M590.500 277.400 q4.500 -2.400 9.500 0 M613.500 277 q4.500 -2.200 9 .2" stroke="#33201e" stroke-width="1" fill="none"/>
<path d="M589.500 273.500 q5 -2.400 10.500 -1 M612 272.800 q5 -1.800 10.500 .6" stroke="#5a3a32" stroke-width="1.300" fill="none"/>
<path d="M609 284 C610 290 612 294 613.500 296.500 C611 298.500 607.500 298.500 605.500 297" stroke="#cfa896" stroke-width="1.400" fill="none"/>
<path d="M612.500 290 L615 296.500 L610 298 Z" fill="#c9a08e" opacity=".7"/>
<path d="M595.500 305.500 C602 303.500 611 303.500 618.500 304.500" stroke="#b97f72" stroke-width="1.500" fill="none"/>
<path d="M598 307.500 C603 309.500 611 309.500 616 307.500" stroke="#dcaea2" stroke-width="1.800" fill="none"/>
<!-- hair -->
<path d="M557.900 268.200 C558 263 558.500 259 559.600 255.700 C561.500 250.500 564 246.500 566.800 243.200 C570.500 239 574.500 236.500 579.300 234.300 C584 232.200 588.500 231 593.600 230.700 C598.500 230.300 603.500 230.500 607.900 231.600 C612.500 233 616.500 235 620.400 237.900 C624.500 241 628 244.500 631 248.600 C633.800 252.500 636 256.500 637.300 261 C638.700 266 639.200 271.500 639 277 C638.800 282 638.300 287 637.300 291.400 C636.300 295.500 635 299 632.900 302 C631.500 298.500 630.200 295 629.300 291.400 C628.800 287.500 628.600 283 628.400 279 C627 277 625.500 275 624 273.600 C620 271.500 616 269.500 611.400 268.200 C607 268 603 268.800 599 270 C595 271 591.500 272 588.200 273.600 C585 275 582 277 579.300 279 C578 283 577.200 287 576.600 291.400 L575.700 298.600 C574.500 302 572.500 305.500 571.300 309.300 C572 313 573 316.500 574 320 C575.500 322 577 324 578.400 325.400 C574.500 322 571 317.500 568.600 312.900 C566.200 307.500 564.500 302 563.200 296.800 C561.700 292 560.500 287.500 559.600 282.500 C558.700 277.500 558 273 557.900 268.200 Z" fill="url(#hairg)"/>
<g fill="#3a221d">
<path d="M560.0 262.0 l-1.92 -1.20 2.40 -1.80z"/><path d="M565.0 247.0 l-1.80 -2.10 3.00 -0.30z"/><path d="M575.0 237.5 l-1.20 -2.28 3.00 0.96z"/><path d="M590.0 231.8 l0.60 -1.80 2.10 1.56z"/><path d="M610.0 232.5 l1.80 -1.68 0.90 2.40z"/><path d="M625.0 242.0 l2.40 -1.20 -0.30 2.70z"/><path d="M635.0 256.0 l2.10 -0.30 -1.08 2.40z"/><path d="M638.5 280.0 l1.50 1.20 -1.80 1.50z"/><path d="M635.5 297.0 l1.20 2.10 -2.10 0.60z"/>
<path d="M559.0 285.0 l-1.68 0.90 1.92 1.50z"/><path d="M563.5 300.0 l-1.80 1.20 2.40 1.20z"/><path d="M569.0 314.0 l-1.50 1.80 2.70 0.30z"/><path d="M574.5 322.0 l-0.60 2.70 2.70 -0.90z"/>
<path d="M592.0 271.5 l-1.20 3.00 2.40 -2.10z"/><path d="M603.0 269.0 l-0.60 2.70 2.10 -2.10z"/><path d="M615.0 269.5 l0.60 2.40 1.50 -1.80z"/><path d="M582.0 277.0 l-1.20 3.00 2.40 -1.80z"/>
</g>
<g clip-path="url(#hairc)" fill="none" stroke-linecap="round" filter="url(#soft)"><path d="M594.4 242.4 Q581.5 246.8 576.0 263.4" stroke="#8b5d4a" stroke-width="2.1" opacity="0.54"/><path d="M604.0 236.7 Q587.2 239.7 580.0 254.1" stroke="#7a4f3f" stroke-width="1.7" opacity="0.68"/><path d="M597.4 242.7 Q584.3 245.0 578.7 258.2" stroke="#6e4638" stroke-width="1.1" opacity="0.50"/><path d="M604.6 243.7 Q595.1 246.4 591.0 264.7" stroke="#8b5d4a" stroke-width="1.6" opacity="0.70"/><path d="M602.3 247.1 Q574.6 251.9 562.7 277.7" stroke="#7a4f3f" stroke-width="1.9" opacity="0.73"/><path d="M610.5 244.8 Q588.2 248.7 578.6 270.7" stroke="#8b5d4a" stroke-width="1.1" opacity="0.62"/><path d="M593.8 244.0 Q615.6 247.8 624.9 269.0" stroke="#24120f" stroke-width="1.9" opacity="0.78"/><path d="M608.9 236.8 Q588.8 240.7 580.1 258.0" stroke="#9a6a55" stroke-width="1.5" opacity="0.72"/><path d="M612.9 245.9 Q592.0 250.2 583.0 277.0" stroke="#6e4638" stroke-width="2.1" opacity="0.59"/><path d="M602.9 238.6 Q626.7 242.8 636.9 263.2" stroke="#24120f" stroke-width="1.2" opacity="0.61"/><path d="M604.0 246.6 Q624.1 250.3 632.7 271.6" stroke="#24120f" stroke-width="1.3" opacity="0.62"/><path d="M596.0 238.1 Q582.9 243.5 577.3 279.9" stroke="#7a4f3f" stroke-width="0.9" opacity="0.78"/><path d="M603.7 243.3 Q591.4 246.0 586.1 257.2" stroke="#7a4f3f" stroke-width="1.8" opacity="0.66"/><path d="M611.0 245.4 Q599.2 247.7 594.1 261.9" stroke="#321c18" stroke-width="1.4" opacity="0.61"/><path d="M612.7 241.3 Q597.1 244.1 590.4 257.4" stroke="#8b5d4a" stroke-width="1.0" opacity="0.68"/><path d="M594.4 238.5 Q588.6 242.7 586.1 271.7" stroke="#9a6a55" stroke-width="2.1" opacity="0.69"/><path d="M612.6 241.8 Q603.3 245.6 599.4 259.8" stroke="#7a4f3f" stroke-width="1.0" opacity="0.59"/><path d="M593.5 247.4 Q584.6 250.1 580.8 268.0" stroke="#7a4f3f" stroke-width="1.8" opacity="0.82"/><path d="M594.8 246.1 Q619.8 250.5 630.5 272.2" stroke="#2a1614" stroke-width="1.4" opacity="0.54"/><path d="M605.3 245.5 Q580.2 249.8 569.4 272.4" stroke="#7a4f3f" stroke-width="2.0" opacity="0.75"/><path d="M593.6 236.3 Q574.0 239.7 565.7 257.6" stroke="#9a6a55" stroke-width="1.2" opacity="0.69"/><path d="M600.0 247.7 Q583.7 252.3 576.7 282.4" stroke="#8b5d4a" stroke-width="1.2" opacity="0.53"/><path d="M609.8 241.8 Q581.6 246.9 569.5 277.3" stroke="#8b5d4a" stroke-width="2.0" opacity="0.50"/><path d="M610.8 241.2 Q597.4 244.0 591.7 261.7" stroke="#8b5d4a" stroke-width="1.9" opacity="0.84"/><path d="M607.5 238.0 Q577.7 243.4 564.9 268.9" stroke="#7a4f3f" stroke-width="1.7" opacity="0.64"/><path d="M602.5 247.2 Q619.2 251.4 626.4 268.2" stroke="#7a4f3f" stroke-width="0.9" opacity="0.77"/><path d="M595.8 247.8 Q621.9 252.5 633.0 279.4" stroke="#7a4f3f" stroke-width="0.9" opacity="0.54"/><path d="M603.9 246.0 Q590.4 249.3 584.6 270.2" stroke="#9a6a55" stroke-width="2.1" opacity="0.71"/><path d="M610.6 237.6 Q634.3 242.5 644.4 263.8" stroke="#8b5d4a" stroke-width="2.0" opacity="0.76"/><path d="M595.8 243.4 Q585.2 246.1 580.7 263.3" stroke="#8b5d4a" stroke-width="1.3" opacity="0.66"/><path d="M604.2 239.0 Q594.4 241.5 590.3 257.8" stroke="#8b5d4a" stroke-width="1.6" opacity="0.67"/><path d="M605.3 242.1 Q607.5 245.7 608.4 258.8" stroke="#24120f" stroke-width="1.3" opacity="0.65"/><path d="M603.5 246.5 Q618.0 249.5 624.3 262.5" stroke="#24120f" stroke-width="2.1" opacity="0.53"/><path d="M599.3 244.1 Q579.6 247.5 571.2 264.4" stroke="#7a4f3f" stroke-width="1.8" opacity="0.76"/><path d="M606.2 237.7 Q632.4 242.3 643.6 267.7" stroke="#321c18" stroke-width="1.2" opacity="0.83"/><path d="M609.6 237.9 Q577.7 243.4 564.0 271.9" stroke="#6e4638" stroke-width="1.3" opacity="0.53"/><path d="M604.1 241.3 Q593.8 243.5 589.4 257.5" stroke="#9a6a55" stroke-width="1.6" opacity="0.57"/><path d="M597.6 246.5 Q627.0 251.8 639.6 281.7" stroke="#9a6a55" stroke-width="1.0" opacity="0.76"/><path d="M611.2 245.8 Q601.7 249.4 597.7 262.9" stroke="#7a4f3f" stroke-width="1.6" opacity="0.66"/><path d="M609.0 238.2 Q593.2 241.3 586.5 255.0" stroke="#2a1614" stroke-width="1.7" opacity="0.77"/><path d="M610.3 241.4 Q603.4 243.8 600.5 259.8" stroke="#24120f" stroke-width="1.4" opacity="0.82"/><path d="M611.8 247.6 Q606.1 252.2 603.7 268.6" stroke="#2a1614" stroke-width="1.2" opacity="0.57"/><path d="M603.0 238.1 Q589.9 241.3 584.2 261.4" stroke="#8b5d4a" stroke-width="2.2" opacity="0.46"/><path d="M603.3 238.9 Q571.5 244.4 557.9 273.1" stroke="#6e4638" stroke-width="1.8" opacity="0.67"/><path d="M597.3 238.8 Q596.9 241.9 596.7 253.4" stroke="#7a4f3f" stroke-width="1.4" opacity="0.59"/><path d="M607.8 239.1 Q601.5 241.5 598.7 250.5" stroke="#8b5d4a" stroke-width="1.8" opacity="0.60"/><path d="M612.2 261.5 Q600.3 268.3 591.8 278.5" stroke="#9a6a55" stroke-width="1.3" opacity="0.59"/><path d="M626.8 261.6 Q620.7 265.5 607.1 274.0" stroke="#9a6a55" stroke-width="1.1" opacity="0.62"/><path d="M598.7 250.5 Q590.7 255.3 577.5 262.9" stroke="#24120f" stroke-width="1.0" opacity="0.64"/><path d="M597.3 246.4 Q590.7 249.4 581.1 258.7" stroke="#24120f" stroke-width="1.1" opacity="0.81"/><path d="M621.1 255.5 Q610.7 262.0 598.4 272.8" stroke="#2a1614" stroke-width="1.5" opacity="0.52"/><path d="M622.7 260.3 Q615.2 267.4 601.9 277.6" stroke="#2a1614" stroke-width="1.7" opacity="0.70"/><path d="M622.0 246.3 Q613.5 250.4 600.4 264.2" stroke="#321c18" stroke-width="1.1" opacity="0.51"/><path d="M600.3 251.8 Q594.9 257.4 586.8 270.1" stroke="#321c18" stroke-width="1.4" opacity="0.59"/><path d="M604.4 253.3 Q601.3 261.6 591.5 272.6" stroke="#2a1614" stroke-width="1.0" opacity="0.76"/><path d="M604.1 247.2 Q595.4 251.9 588.4 264.5" stroke="#6e4638" stroke-width="1.4" opacity="0.63"/><path d="M611.3 256.9 Q601.8 263.7 588.6 273.1" stroke="#7a4f3f" stroke-width="1.2" opacity="0.73"/><path d="M618.2 255.9 Q612.2 258.5 604.3 270.8" stroke="#8b5d4a" stroke-width="1.6" opacity="0.74"/><path d="M605.3 254.3 Q594.8 257.0 586.8 268.9" stroke="#7a4f3f" stroke-width="1.2" opacity="0.53"/><path d="M611.1 250.6 Q608.6 253.2 598.1 265.7" stroke="#6e4638" stroke-width="1.1" opacity="0.83"/><path d="M602.7 255.3 Q599.5 261.4 588.8 270.5" stroke="#24120f" stroke-width="1.5" opacity="0.60"/><path d="M599.6 251.8 Q590.5 259.6 580.6 270.6" stroke="#6e4638" stroke-width="1.6" opacity="0.64"/><path d="M619.3 252.7 Q610.6 256.0 602.0 263.9" stroke="#9a6a55" stroke-width="1.7" opacity="0.54"/><path d="M625.6 257.4 Q613.6 261.3 601.0 270.3" stroke="#24120f" stroke-width="1.5" opacity="0.63"/></g>
<!-- hair highlights -->
<g filter="url(#soft2)" fill="none" stroke-linecap="round">
<path d="M566 262 C570 250 580 241 592 238" stroke="#7a4e3e" stroke-width="4" opacity=".85"/>
<path d="M582 268 C590 256 604 250 618 254" stroke="#8a5a48" stroke-width="3.500" opacity=".8"/>
<path d="M600 238 C612 238 624 246 630 258" stroke="#6a4034" stroke-width="3.500" opacity=".8"/>
<path d="M563 275 C564 285 567 296 571 304" stroke="#5e3a30" stroke-width="3" opacity=".8"/>
<path d="M604 262 C612 262 622 266 627 272" stroke="#2a1614" stroke-width="3" opacity=".7"/>
<path d="M575 250 C580 246 586 244 590 244" stroke="#2c1816" stroke-width="2.500" opacity=".6"/>
</g>
</g>
<!-- K -->
<path d="M505 237 L519.500 240.300 L512.300 268.500 Q526 253 536.800 239 L552 242.300 L551.300 249.500 Q545 264 535 273.500 Q530 277.500 524.500 280.500 L536.800 311.500 L533 316.500 L523.800 320 L520.500 317 L505.600 292 L499 311.500 L496.500 312.400 L484.600 308.800 L483.700 305.800 L501.800 239.800 Z" fill="#000" stroke="#000" stroke-width="2.400" stroke-linejoin="round"/>
</svg></div>

<!-- DIALOG -->
<!--DLG_START-->
<div id="dlgshadow" class="abs"></div>
<div id="dlg" class="abs"><div id="glass1"></div><div id="glass4"></div><div id="blob3"></div><div id="blob1"></div><div id="blob2"></div><div id="glass2"></div><div id="glass2b"></div><div id="glass3"></div><div id="glass5"></div><div id="blob4"></div><div id="dlghi"></div></div>
<div id="clientframe" class="abs"></div>
<div id="client" class="abs"></div>
<div class="abs" id="titleglow"></div>
<div class="abs" id="dlgtitle">Layer Style</div>
<div class="abs" id="closebtn"><svg width="48" height="19" viewBox="0 0 48 19" style="position:absolute;left:0;top:0"><path d="M20.500 5.500 L28 12 M28 5.500 L20.500 12" stroke="#3c4058" stroke-width="4" stroke-linecap="square"/><path d="M20.500 5.500 L28 12 M28 5.500 L20.500 12" stroke="#fff" stroke-width="2.300" stroke-linecap="square"/></svg></div>

<!-- styles list -->
<div class="abs" style="left:729px;top:152px;width:146px;height:424px;border:1px solid #9d9d9d"></div>
<div class="dt" style="left:736px;top:158px">Styles</div>
<div class="abs" style="left:730px;top:174px;width:144px;height:3px;border-top:1px solid #9d9d9d;border-bottom:1px solid #9d9d9d;background:#f8f8f8"></div>
<div class="dt" style="left:736px;top:182px">Blending Options: Default</div>
<div class="abs" style="left:730px;top:198px;width:144px;height:1px;background:#9d9d9d"></div>
<div class="cb" style="left:735px;top:203px"><i></i></div><div class="dt" style="left:751px;top:203px;letter-spacing:-0.45px">Bevel &amp; Emboss</div>
<div class="rowsep" style="top:220px"></div>
<div class="cb" style="left:748px;top:225px"><i></i></div><div class="dt" style="left:764px;top:225px">Contour</div>
<div class="rowsep" style="top:242px"></div>
<div class="cb" style="left:748px;top:247px"><i></i></div><div class="dt" style="left:764px;top:247px">Texture</div>
<div class="rowsep" style="top:264px"></div>
<div class="cb" style="left:735px;top:269px"><i></i></div><div class="dt" style="left:751px;top:269px">Stroke</div>
<div class="rowsep" style="top:286px"></div>
<div class="cb" style="left:735px;top:291px"><i></i></div><div class="dt" style="left:751px;top:291px">Inner Shadow</div>
<div class="rowsep" style="top:308px"></div>
<div class="cb" style="left:735px;top:313px"><i></i></div><div class="dt" style="left:751px;top:313px">Inner Glow</div>
<div class="rowsep" style="top:330px"></div>
<div class="cb" style="left:735px;top:335px"><i></i></div><div class="dt" style="left:751px;top:335px;letter-spacing:-0.4px">Satin</div>
<div class="rowsep" style="top:352px"></div>
<div class="abs" style="left:730px;top:353px;width:144px;height:21px;background:#3399ff"></div>
<div class="cb on" style="left:735px;top:357px"><svg width="11" height="11" viewBox="0 0 11 11" style="position:absolute;left:-1px;top:-1px"><path d="M2.800 5.400 L4.600 7.800 L8 2.600" stroke="#31459a" stroke-width="1.450" fill="none"/></svg></div><div class="dt" style="left:751px;top:357px;letter-spacing:-0.5px">Color Overlay</div>
<div class="rowsep" style="top:374px"></div>
<div class="cb" style="left:735px;top:379px"><i></i></div><div class="dt" style="left:751px;top:379px;letter-spacing:-0.33px">Gradient Overlay</div>
<div class="rowsep" style="top:396px"></div>
<div class="cb" style="left:735px;top:401px"><i></i></div><div class="dt" style="left:751px;top:401px;letter-spacing:-0.3px">Pattern Overlay</div>
<div class="rowsep" style="top:418px"></div>
<div class="cb" style="left:735px;top:423px"><i></i></div><div class="dt" style="left:751px;top:423px">Outer Glow</div>
<div class="rowsep" style="top:440px"></div>
<div class="cb" style="left:735px;top:445px"><i></i></div><div class="dt" style="left:751px;top:445px">Drop Shadow</div>
<div class="rowsep" style="top:462px"></div>

<!-- group boxes -->
<div class="abs" style="left:891px;top:156px;width:339px;height:422px;border:1px solid #a6a6a6"></div>
<div class="dt b" style="left:906px;top:150px;background:#eee;padding:0 8px;width:84px">Color Overlay</div>
<div class="abs" style="left:901px;top:170px;width:319px;height:64px;border:1px solid #a6a6a6"></div>
<div class="dt b" style="left:916px;top:164px;background:#eee;padding:0 7px;width:41px">Color</div>
<div class="dt" style="left:922px;top:185px;letter-spacing:-0.25px">Blend Mode:</div>
<div class="abs" style="left:983px;top:181px;width:121px;height:22px;background:#fff;border:1px solid #dcdcdc;border-radius:1px"></div>
<div class="dt" style="left:988px;top:186px;letter-spacing:-0.3px">Normal</div>
<div class="abs" style="left:1091px;top:191px;width:0;height:0;border-left:4px solid transparent;border-right:4px solid transparent;border-top:4px solid #000"></div>
<div class="abs" style="left:1107px;top:184px;width:43px;height:16px;background:#ff0000;border:1px solid #a08888"></div>
<div class="dt" style="left:940px;top:209px;letter-spacing:0">Opacity:</div>
<div class="abs" style="left:987px;top:211px;width:104px;height:5px;border-radius:3px;background:linear-gradient(#a8a8a8,#d4d4d4);border:1px solid #9a9a9a;border-bottom-color:#c8c8c8"></div>
<svg class="abs" style="left:1079px;top:211px" width="13" height="12" viewBox="0 0 13 12"><path d="M6.500 1 L11.500 6.500 V10.500 H1.500 V6.500 Z" fill="#dcdcdc" stroke="#8a8a8a" stroke-width="1"/></svg>
<div class="abs" style="left:1094px;top:207px;width:54px;height:18px;background:#fff;border:1px solid #5d9fd8;border-top-color:#3d7bad;border-radius:2px;box-shadow:inset 0 0 0 1px #e4eef8"></div>
<div class="abs" style="left:1100px;top:210px;width:16px;height:12px;background:#3399ff"></div>
<div class="dt" style="left:1101px;top:210px;color:#fff;font-size:10.500px;letter-spacing:-0.6px">100</div>
<div class="dt" style="left:1151px;top:210px">%</div>
<div class="wbtn" style="left:966px;top:240px;width:83px;height:18px;line-height:16px;font-size:10.500px;letter-spacing:-0.3px">Make Default</div>
<div class="wbtn" style="left:1059px;top:240px;width:96px;height:18px;line-height:16px;font-size:10.500px;letter-spacing:-0.4px">Reset to Default</div>
<!-- tooltip -->
<div class="abs" style="left:1118px;top:213px;width:120px;height:19px;background:#ffffe1;border:1px solid #000;font-size:12px;line-height:17px;padding-left:4px;white-space:nowrap;color:#000;letter-spacing:-0.1px">Set color of overlay</div>
<!-- right buttons -->
<div class="wbtn" id="okbtn" style="left:1246px;top:152px;width:89px;height:18px;line-height:18px;font-size:12.500px">OK</div>
<div class="wbtn" style="left:1246px;top:180px;width:89px;height:18px;line-height:18px;font-size:12.500px">Cancel</div>
<div class="wbtn" style="left:1246px;top:208px;width:89px;height:18px;line-height:18px;font-size:12.500px">New Style...</div>
<div class="cb on big" style="left:1258px;top:235px"><svg width="13" height="13" viewBox="0 0 13 13" style="position:absolute;left:-1px;top:-1px"><path d="M3.200 6.400 L5.600 9.600 L9.800 3" stroke="#2b3f94" stroke-width="1.800" fill="none"/></svg></div>
<div class="dt" style="left:1274px;top:236px;font-size:12.500px;letter-spacing:0">Preview</div>
<div class="abs" style="left:1257px;top:256px;width:66px;height:65px;background:#d4d4d4;border:1px solid #e4e4e4"></div>
<div class="abs" style="left:1274px;top:274px;width:31px;height:31px;background:#ff0000"></div>
<!--DLG_END-->
<div id="bluestrip" class="abs"></div>
</div>
</body>
</html>
